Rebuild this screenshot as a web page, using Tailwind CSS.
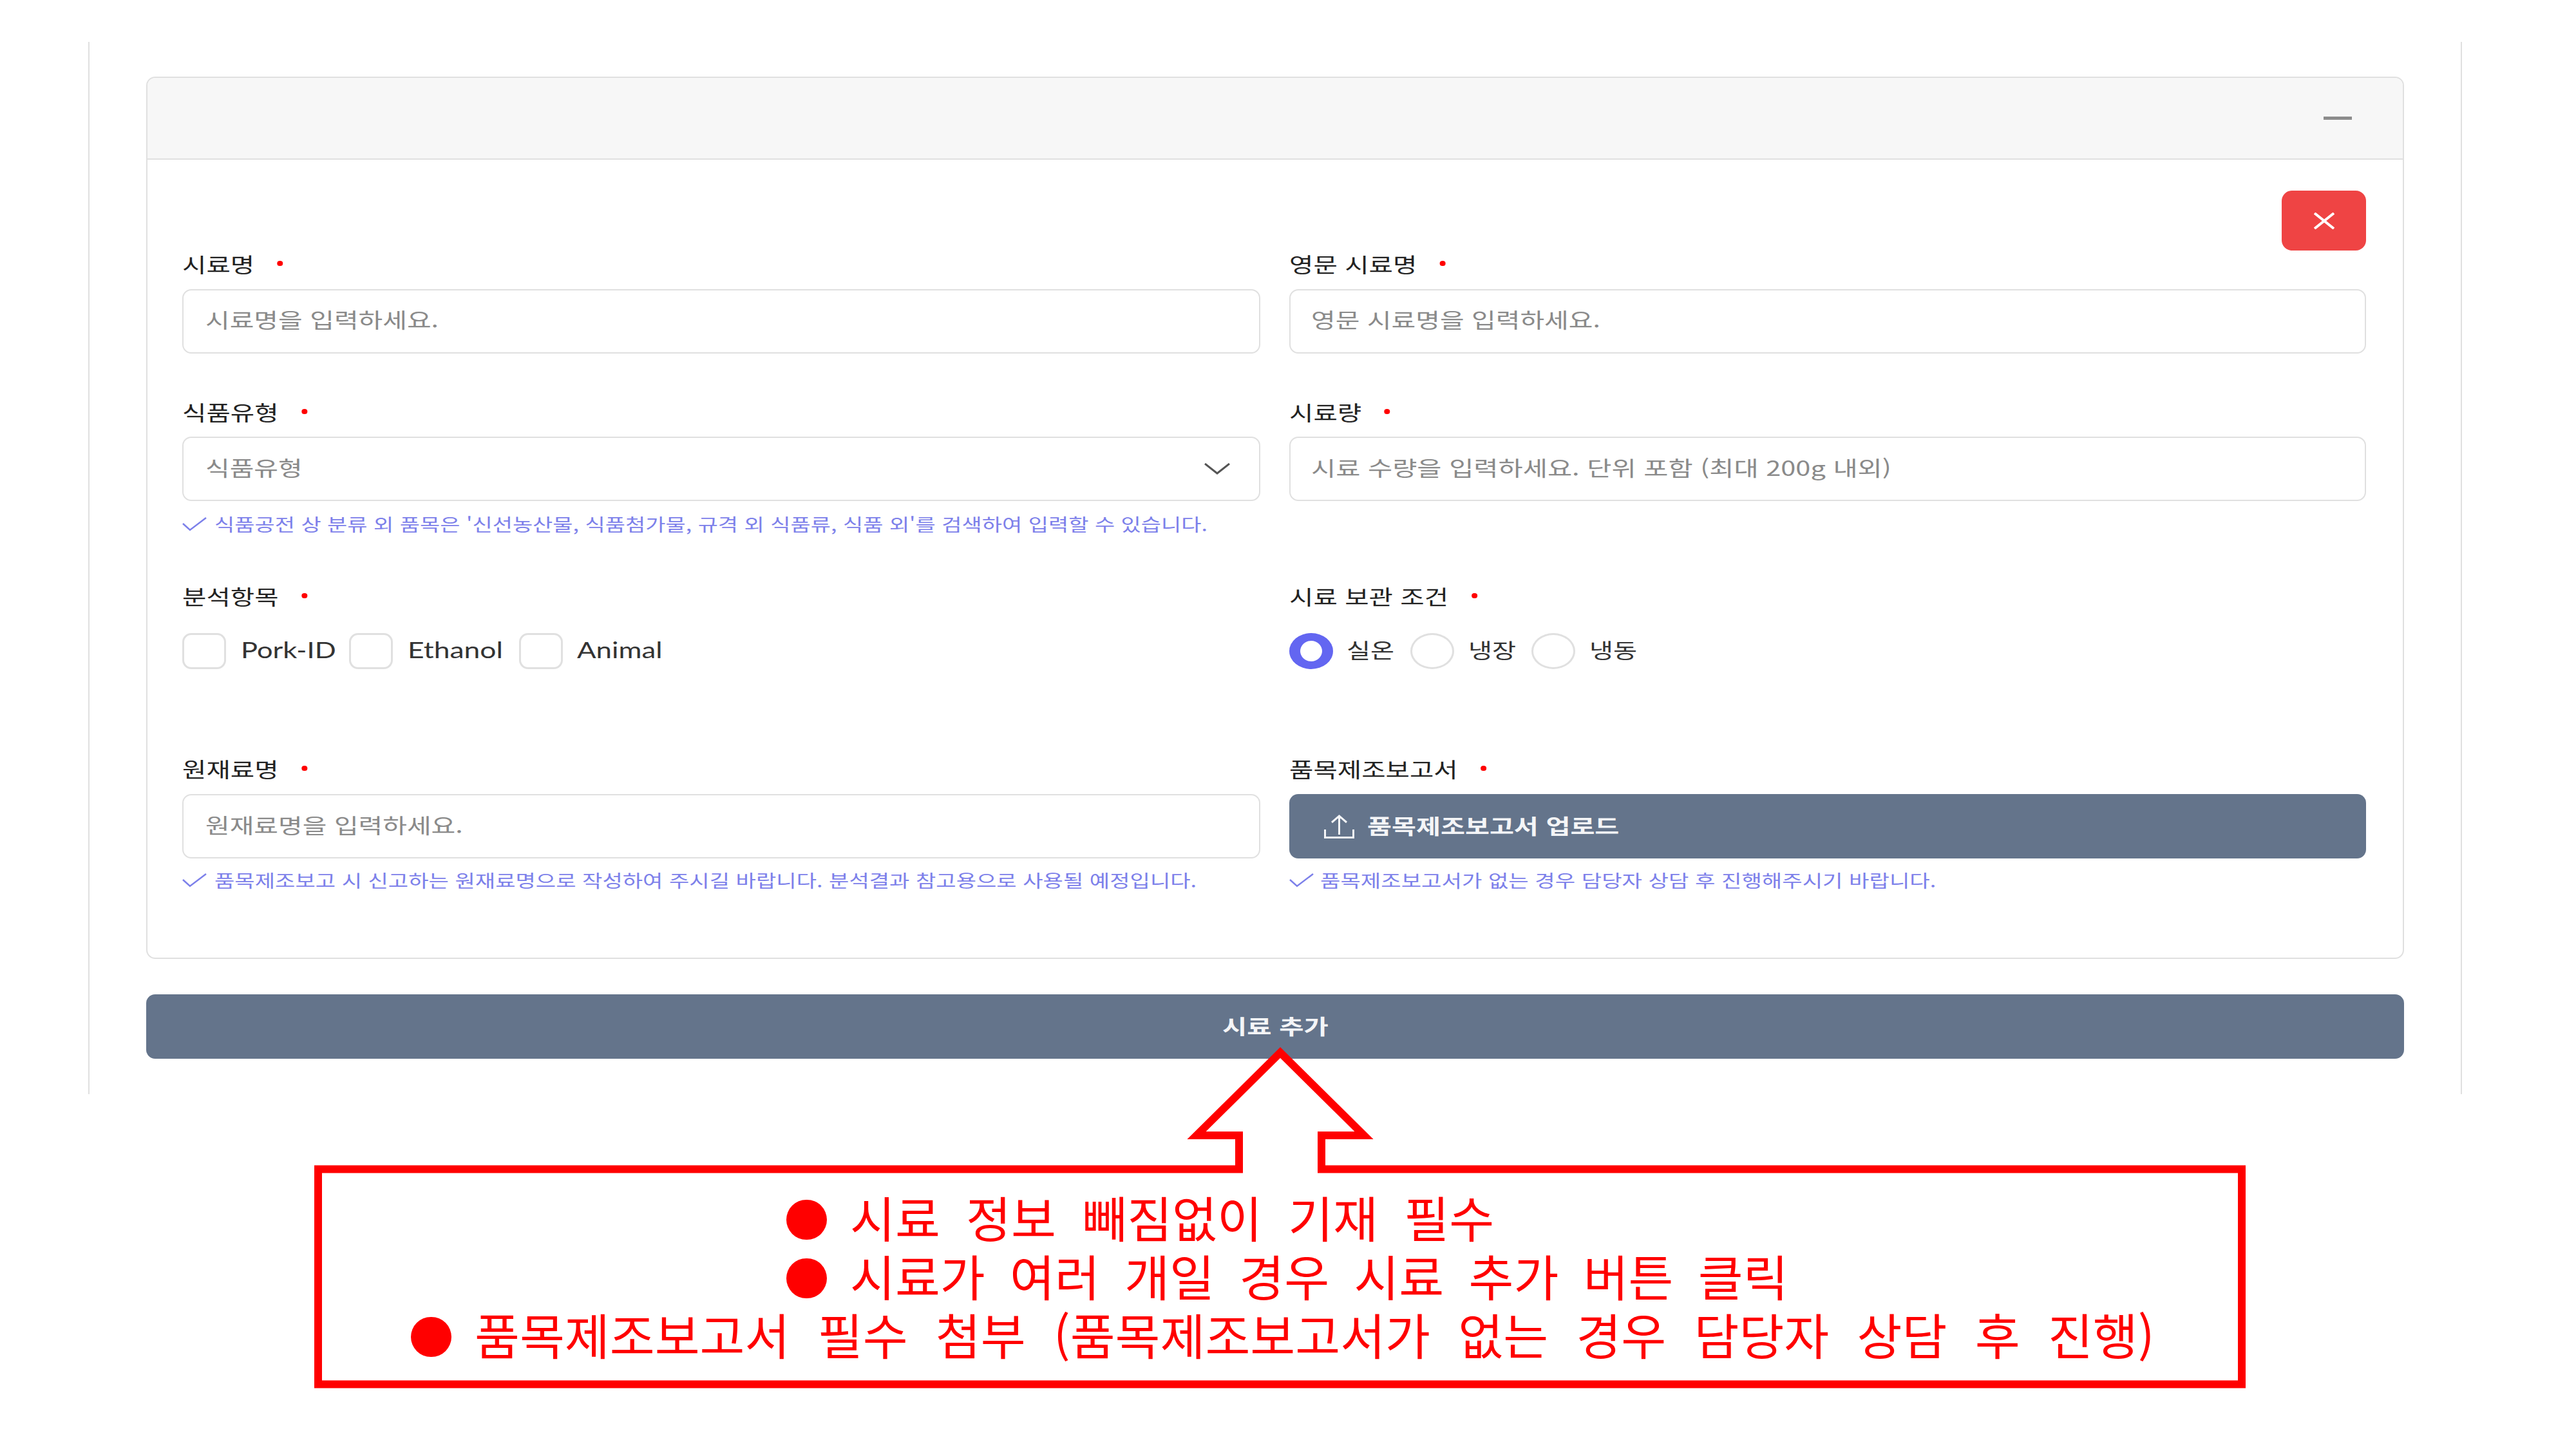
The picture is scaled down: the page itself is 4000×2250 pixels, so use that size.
<!DOCTYPE html>
<html lang="ko">
  <head>
    <meta charset="UTF-8" />
    <title>시료 추가</title>
    <script src="https://cdn.jsdelivr.net/npm/@tailwindcss/browser@4"></script>
  </head>
  <body class="bg-white">
    <div class="relative w-[4000px] h-[2250px] overflow-hidden bg-white font-['Noto_Sans_CJK_KR','Noto_Sans',sans-serif]">
      <!-- 페이지 본문 -->
      <div class="ml-[137px] mt-[65px] inline-block align-top w-[3686px] h-[1634px] border-x-2 border-[#e0e0e0] pt-[54px] pl-[88px]">
        <!-- 시료 카드 -->
        <section class="w-[3506px] h-[1370px] border-2 border-[#e0e0e0] rounded-[14px] overflow-hidden">
          <div class="h-[127px] bg-[#f7f7f7] border-b-2 border-[#e0e0e0] flex items-center justify-end pr-[79px]">
            <div class="w-[44px] h-[5px] bg-[#8c8c8c]"></div>
          </div>
          <div class="pl-[54px] pr-[57px]">
            <div class="flex justify-end pt-[48px]">
              <button class="w-[131px] h-[93px] bg-[#ef4444] rounded-[16px] flex items-center justify-center">
                <svg class="w-[32px] h-[26px]" viewBox="0 0 32 26" fill="none" stroke="#ffffff" stroke-width="4"><path d="M1 1 L31 25 M31 1 L1 25" /></svg>
              </button>
            </div>

            <!-- 시료명 / 영문 시료명 -->
            <div class="grid grid-cols-[1674px_1fr] gap-x-[45px] mt-[2px]">
              <div>
                <div class="h-[40px] pb-[4px] flex items-center text-[#222222] text-[32px] mb-[18px]">
                  <span class="inline-flex items-center whitespace-nowrap origin-left scale-x-[1.27]">시료명<i class="ml-[28px] w-[7px] h-[8px] rounded-full bg-[#ff0000]"></i></span>
                </div>
                <div class="h-[100px] pb-[8px] border-2 border-[#e0e0e0] rounded-[14px] flex items-center pl-[34px] text-[32px] text-[#8a8a8a]">
                  <span class="whitespace-nowrap origin-left scale-x-[1.28] inline-block">시료명을 입력하세요.</span>
                </div>
              </div>
              <div>
                <div class="h-[40px] pb-[4px] flex items-center text-[#222222] text-[32px] mb-[18px]">
                  <span class="inline-flex items-center whitespace-nowrap origin-left scale-x-[1.27]">영문 시료명<i class="ml-[28px] w-[7px] h-[8px] rounded-full bg-[#ff0000]"></i></span>
                </div>
                <div class="h-[100px] pb-[8px] border-2 border-[#e0e0e0] rounded-[14px] flex items-center pl-[32px] text-[32px] text-[#8a8a8a]">
                  <span class="whitespace-nowrap origin-left scale-x-[1.28] inline-block">영문 시료명을 입력하세요.</span>
                </div>
              </div>
            </div>

            <!-- 식품유형 / 시료량 -->
            <div class="grid grid-cols-[1674px_1fr] gap-x-[45px] mt-[72px]">
              <div>
                <div class="h-[40px] pb-[4px] flex items-center text-[#222222] text-[32px] mb-[17px]">
                  <span class="inline-flex items-center whitespace-nowrap origin-left scale-x-[1.27]">식품유형<i class="ml-[28px] w-[7px] h-[8px] rounded-full bg-[#ff0000]"></i></span>
                </div>
                <div class="h-[100px] border-2 border-[#e0e0e0] rounded-[14px] flex items-center justify-between pl-[34px] pr-[45px] text-[32px] text-[#8a8a8a]">
                  <span class="whitespace-nowrap origin-left scale-x-[1.28] inline-block -translate-y-[3px]">식품유형</span>
                  <svg class="w-[40px] h-[18px]" viewBox="0 0 40 18" fill="none" stroke="#555555" stroke-width="3"><path d="M1 1 L20 16 L39 1" /></svg>
                </div>
                <div class="h-[30px] pb-[4px] mt-[23px] flex items-center text-[27px] text-[#7c80ea]">
                  <svg class="w-[38px] h-[22px] shrink-0" viewBox="0 0 38 22" fill="none" stroke="#7c80ea" stroke-width="2.5"><path d="M1 10 L12 20 L37 1" /></svg>
                  <span class="ml-[12px] whitespace-nowrap origin-left scale-x-[1.257] inline-block">식품공전 상 분류 외 품목은 '신선농산물, 식품첨가물, 규격 외 식품류, 식품 외'를 검색하여 입력할 수 있습니다.</span>
                </div>
              </div>
              <div>
                <div class="h-[40px] pb-[4px] flex items-center text-[#222222] text-[32px] mb-[17px]">
                  <span class="inline-flex items-center whitespace-nowrap origin-left scale-x-[1.27]">시료량<i class="ml-[28px] w-[7px] h-[8px] rounded-full bg-[#ff0000]"></i></span>
                </div>
                <div class="h-[100px] pb-[6px] border-2 border-[#e0e0e0] rounded-[14px] flex items-center pl-[32px] text-[32px] text-[#8a8a8a]">
                  <span class="whitespace-nowrap origin-left scale-x-[1.297] inline-block">시료 수량을 입력하세요. 단위 포함 (최대 200g 내외)</span>
                </div>
              </div>
            </div>

            <!-- 분석항목 / 시료 보관 조건 -->
            <div class="grid grid-cols-[1674px_1fr] gap-x-[45px] mt-[76px]">
              <div>
                <div class="h-[40px] pb-[4px] flex items-center text-[#222222] text-[32px] mb-[36px]">
                  <span class="inline-flex items-center whitespace-nowrap origin-left scale-x-[1.27]">분석항목<i class="ml-[28px] w-[7px] h-[8px] rounded-full bg-[#ff0000]"></i></span>
                </div>
                <div class="flex items-center text-[35px] text-[#333333] font-['Lato','Noto_Sans',sans-serif]">
                  <div class="w-[68px] h-[56px] border-[3px] border-[#e0e0e0] rounded-[14px]"></div>
                  <div class="w-[145px] ml-[23px]"><span class="whitespace-nowrap origin-left scale-x-[1.24] inline-block -translate-y-[3px]">Pork-ID</span></div>
                  <div class="w-[68px] h-[56px] border-[3px] border-[#e0e0e0] rounded-[14px] ml-[23px]"></div>
                  <div class="w-[150px] ml-[23px]"><span class="whitespace-nowrap origin-left scale-x-[1.27] inline-block -translate-y-[3px]">Ethanol</span></div>
                  <div class="w-[68px] h-[56px] border-[3px] border-[#e0e0e0] rounded-[14px] ml-[23px]"></div>
                  <div class="w-[132px] ml-[22px]"><span class="whitespace-nowrap origin-left scale-x-[1.25] inline-block -translate-y-[3px]">Animal</span></div>
                </div>
              </div>
              <div>
                <div class="h-[40px] pb-[4px] flex items-center text-[#222222] text-[32px] mb-[36px]">
                  <span class="inline-flex items-center whitespace-nowrap origin-left scale-x-[1.27]">시료 보관 조건<i class="ml-[28px] w-[7px] h-[8px] rounded-full bg-[#ff0000]"></i></span>
                </div>
                <div class="flex items-center text-[32px] text-[#333333]">
                  <div class="w-[68px] h-[56px] border-x-[17px] border-y-[12px] border-[#6366f1] rounded-[50%]"></div>
                  <div class="w-[74px] ml-[21px]"><span class="whitespace-nowrap origin-left scale-x-[1.26] inline-block -translate-y-[3px]">실온</span></div>
                  <div class="w-[68px] h-[56px] border-[3px] border-[#e0e0e0] rounded-[50%] ml-[25px]"></div>
                  <div class="w-[74px] ml-[22px]"><span class="whitespace-nowrap origin-left scale-x-[1.26] inline-block -translate-y-[3px]">냉장</span></div>
                  <div class="w-[68px] h-[56px] border-[3px] border-[#e0e0e0] rounded-[50%] ml-[24px]"></div>
                  <div class="w-[74px] ml-[22px]"><span class="whitespace-nowrap origin-left scale-x-[1.26] inline-block -translate-y-[3px]">냉동</span></div>
                </div>
              </div>
            </div>

            <!-- 원재료명 / 품목제조보고서 -->
            <div class="grid grid-cols-[1674px_1fr] gap-x-[45px] mt-[137px]">
              <div>
                <div class="h-[40px] pb-[6px] flex items-center text-[#222222] text-[32px] mb-[17px]">
                  <span class="inline-flex items-center whitespace-nowrap origin-left scale-x-[1.27]">원재료명<i class="ml-[28px] w-[7px] h-[8px] rounded-full bg-[#ff0000]"></i></span>
                </div>
                <div class="h-[100px] pb-[6px] border-2 border-[#e0e0e0] rounded-[14px] flex items-center pl-[34px] text-[32px] text-[#8a8a8a]">
                  <span class="whitespace-nowrap origin-left scale-x-[1.28] inline-block">원재료명을 입력하세요.</span>
                </div>
                <div class="h-[30px] pb-[4px] mt-[21px] flex items-center text-[27px] text-[#7c80ea]">
                  <svg class="w-[38px] h-[22px] shrink-0" viewBox="0 0 38 22" fill="none" stroke="#7c80ea" stroke-width="2.5"><path d="M1 10 L12 20 L37 1" /></svg>
                  <span class="ml-[12px] whitespace-nowrap origin-left scale-x-[1.262] inline-block">품목제조보고 시 신고하는 원재료명으로 작성하여 주시길 바랍니다. 분석결과 참고용으로 사용될 예정입니다.</span>
                </div>
              </div>
              <div>
                <div class="h-[40px] pb-[6px] flex items-center text-[#222222] text-[32px] mb-[17px]">
                  <span class="inline-flex items-center whitespace-nowrap origin-left scale-x-[1.27]">품목제조보고서<i class="ml-[28px] w-[7px] h-[8px] rounded-full bg-[#ff0000]"></i></span>
                </div>
                <button class="w-full h-[100px] bg-[#64748b] rounded-[14px] flex items-center pl-[54px] text-[32px] font-semibold text-[#f4f5f7]">
                  <svg class="w-[47px] h-[37px] shrink-0" viewBox="0 0 47 37" fill="none" stroke="#f4f5f7" stroke-width="3"><path d="M1.5 23 V35.5 H45.5 V23 M23.5 31 V2 M12 12 L23.5 2 L35 12" /></svg>
                  <span class="ml-[20px] whitespace-nowrap origin-left scale-x-[1.29] inline-block -translate-y-[2px]">품목제조보고서 업로드</span>
                </button>
                <div class="h-[30px] pb-[4px] mt-[21px] flex items-center text-[27px] text-[#7c80ea]">
                  <svg class="w-[38px] h-[22px] shrink-0" viewBox="0 0 38 22" fill="none" stroke="#7c80ea" stroke-width="2.5"><path d="M1 10 L12 20 L37 1" /></svg>
                  <span class="ml-[10px] whitespace-nowrap origin-left scale-x-[1.265] inline-block">품목제조보고서가 없는 경우 담당자 상담 후 진행해주시기 바랍니다.</span>
                </div>
              </div>
            </div>
          </div>
        </section>

        <button class="mt-[55px] w-[3506px] h-[100px] bg-[#64748b] rounded-[14px] flex items-center justify-center text-[32px] font-semibold text-[#f4f5f7]">
          <span class="whitespace-nowrap scale-x-[1.3] inline-block -translate-y-[2px]">시료 추가</span>
        </button>
      </div>

      <!-- 빨간 안내 말풍선 -->
      <svg class="absolute left-0 top-0 w-[4000px] h-[2250px]" viewBox="0 0 4000 2250" fill="#ffffff" stroke="#ff0000" stroke-width="12">
        <path d="M494 1815.5 H1924 V1763 H1858 L1988 1634.5 L2118 1763 H2052 V1815.5 H3481 V2149.5 H494 Z" />
      </svg>
      <div class="absolute left-[494px] top-[1848px] w-[2987px] text-[76px] leading-[91px] text-[#ff0000]">
        <div class="flex items-center ml-[727px] whitespace-nowrap [word-spacing:19px]"><i class="w-[63px] h-[62px] rounded-full bg-[#ff0000] mr-[36px]"></i><span class="-translate-y-[4px]">시료 정보 빼짐없이 기재 필수</span></div>
        <div class="flex items-center ml-[727px] whitespace-nowrap [word-spacing:17px]"><i class="w-[63px] h-[62px] rounded-full bg-[#ff0000] mr-[36px]"></i><span class="-translate-y-[4px]">시료가 여러 개일 경우 시료 추가 버튼 클릭</span></div>
        <div class="flex items-center ml-[144px] whitespace-nowrap [word-spacing:22px]"><i class="w-[63px] h-[62px] rounded-full bg-[#ff0000] mr-[36px]"></i><span class="-translate-y-[4px]">품목제조보고서 필수 첨부 (품목제조보고서가 없는 경우 담당자 상담 후 진행)</span></div>
      </div>
    </div>
  </body>
</html>
